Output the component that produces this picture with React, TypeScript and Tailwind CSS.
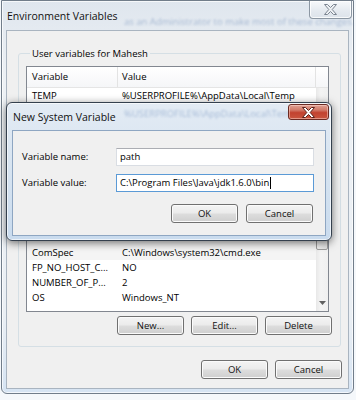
import React from "react";

const ui = "font-['Segoe_UI','Open_Sans','Noto_Sans',sans-serif]";

function XGlyph({ fill, stroke }: { fill: string; stroke: string }) {
  return (
    <svg width="13" height="11" viewBox="-0.5 -0.5 13 11">
      <polygon
        points="0,0 3,0 6,3 9,0 12,0 7.7,5 12,10 9,10 6,7 3,10 0,10 4.3,5"
        fill={fill}
        stroke={stroke}
        strokeWidth="1"
        strokeLinejoin="round"
      />
    </svg>
  );
}

function Btn({ label, className = "" }: { label: string; className?: string }) {
  return (
    <div
      className={`flex h-[19px] w-[67px] items-center justify-center rounded-[3px] border border-[#707070] bg-[linear-gradient(180deg,#f4f4f4_0%,#ebebeb_48%,#dddddd_52%,#cfcfcf_100%)] text-[9.5px] leading-none text-[#111] shadow-[inset_0_0_0_1px_#fbfbfb] ${className}`}
    >
      {label}
    </div>
  );
}

function Row({ a, b, hl = false }: { a: string; b: string; hl?: boolean }) {
  return (
    <div className={`flex h-[15px] items-center text-[9.5px] leading-none ${hl ? "bg-[#f4f4f4]" : ""}`}>
      <div className="w-[91px] shrink-0 pl-[5px] whitespace-nowrap">{a}</div>
      <div className="pl-[4px] whitespace-nowrap">{b}</div>
    </div>
  );
}

export default function App() {
  return (
    <div className={`relative h-[400px] w-[356px] overflow-hidden bg-[#f5f8fb] text-black ${ui}`}>
      {/* Environment Variables window */}
      <div className="ml-[1px] flex h-[394px] w-[353px] flex-col rounded-b-[6px] border border-[#717d8a] bg-[linear-gradient(180deg,#dfe6ee_0%,#edf1f5_20%,#eaeff4_80%,#d6e4f3_100%)] px-[4px] pb-[4px] shadow-[inset_0_0_0_1px_rgba(255,255,255,0.7)]">
        {/* title bar */}
        <div className="relative flex h-[29px] items-start">
          <span className="pointer-events-none absolute left-[118px] top-[14px] whitespace-nowrap text-[9.5px] text-[#7d97bd] opacity-60 blur-[1.3px]">
            as an Administrator to make most of these changes.
          </span>
          <span className="relative ml-[1px] mt-[8px] text-[10.5px] leading-[14px] text-[#111]">
            Environment Variables
          </span>
          <div className="relative -mr-[3px] ml-auto flex h-[18px] w-[43px] items-center justify-center rounded-b-[4px] border border-t-0 border-[#8c97a3] bg-[linear-gradient(180deg,#f7f9fb,#e4e9ef_60%,#dde3ea)] shadow-[inset_0_0_0_1px_rgba(255,255,255,0.8)]">
            <XGlyph fill="#eef1f4" stroke="#7b8490" />
          </div>
        </div>

        {/* client area */}
        <div className="flex flex-1 flex-col border border-[#a9b4c0] bg-[#f0f0f0]">
          <fieldset className="ml-[11px] mr-[7px] mt-[16px] rounded-[3px] border border-[#d5dfe5] pb-[11px] pl-[7px] pr-[8px]">
            <legend className="ml-[4px] px-[2px] text-[9.5px] leading-[13px]">User variables for Mahesh</legend>

            {/* list view */}
            <div className="mr-[3px] mt-[6px] flex h-[246px] flex-col border border-[#828790] bg-white">
              <div className="flex h-[21px] shrink-0 items-center border-b border-[#e5e5e5] bg-[linear-gradient(180deg,#ffffff,#f5f6f8)] text-[9.5px] leading-none">
                <div className="flex h-full w-[91px] items-center border-r border-[#e3e3e3] pl-[5px]">Variable</div>
                <div className="flex h-full w-[198px] items-center border-r border-[#e3e3e3] pl-[4px]">Value</div>
                <div className="flex-1" />
              </div>
              <div className="flex flex-1">
                <div className="flex flex-1 flex-col">
                  <Row a="TEMP" b="%USERPROFILE%\AppData\Local\Temp" />
                  <div className="flex-1 bg-[linear-gradient(180deg,#ffffff,#f4f4f4_30%)]" />
                  <Row a="ComSpec" b="C:\Windows\system32\cmd.exe" hl />
                  <Row a="FP_NO_HOST_C..." b="NO" />
                  <Row a="NUMBER_OF_P..." b="2" />
                  <Row a="OS" b="Windows_NT" />
                  <div className="h-[6px]" />
                </div>
                {/* scrollbar */}
                <div className="flex w-[12px] flex-col bg-[linear-gradient(90deg,#e8e8e8,#f4f4f4_40%,#f0f0f0)]">
                  <div className="h-[17px]" />
                  <div className="h-[145px] rounded-[2px] border border-[#9c9c9c] bg-[linear-gradient(90deg,#f3f3f3,#e2e2e2)]" />
                  <div className="flex-1" />
                  <div className="flex h-[17px] items-center justify-center">
                    <svg width="7" height="4" viewBox="0 0 7 4">
                      <polygon points="0,0 7,0 3.5,4" fill="#606060" />
                    </svg>
                  </div>
                </div>
              </div>
            </div>

            <div className="mt-[4px] flex justify-end gap-[7px]">
              <Btn label="New..." />
              <Btn label="Edit..." />
              <Btn label="Delete" />
            </div>
          </fieldset>

          <div className="mr-[6px] mt-[13px] flex justify-end gap-[7px]">
            <Btn label="OK" />
            <Btn label="Cancel" />
          </div>
        </div>
      </div>

      {/* New System Variable dialog (overlay) */}
      <div className="absolute left-[6px] top-[102px] flex h-[139px] w-[326px] flex-col rounded-[6px] border border-[#34404e] bg-[linear-gradient(180deg,#e3ebf4_0%,#d9e5f1_40%,#c9dbee_100%)] px-[5px] pb-[4px] shadow-[0_2px_9px_rgba(0,0,0,0.55),inset_0_0_0_1px_rgba(255,255,255,0.65)]">
        <div className="relative flex h-[27px] items-start">
          <span className="pointer-events-none absolute left-[112px] top-[4px] whitespace-nowrap text-[9.5px] text-[#7f9cc4] opacity-60 blur-[1.3px]">
            %USERPROFILE%\AppData\Local\Temp
          </span>
          <span className="relative ml-[1px] mt-[7px] text-[10.5px] leading-[14px] text-[#111]">New System Variable</span>
          <div className="relative -mr-[3px] ml-auto mt-[1px] flex h-[16px] w-[41px] items-center justify-center rounded-[3px] border border-[#6b2a22] bg-[linear-gradient(180deg,#e0a194_0%,#d27c6b_35%,#c2422f_55%,#c9553f_100%)] shadow-[inset_0_0_0_1px_rgba(255,220,210,0.5)]">
            <XGlyph fill="#ffffff" stroke="#5a2019" />
          </div>
        </div>
        <div className="flex flex-1 flex-col border border-[#8ea6c2] bg-[#f0f0f0] pl-[9px] pr-[11px] pt-[17px]">
          <div className="flex h-[18px] items-center">
            <div className="w-[94px] shrink-0 text-[9.5px]">Variable name:</div>
            <div className="flex h-[18px] flex-1 items-center border border-[#d9dde3] border-t-[#abadb3] bg-white pl-[3px] text-[9.5px]">
              path
            </div>
          </div>
          <div className="mt-[8px] flex h-[18px] items-center">
            <div className="w-[94px] shrink-0 text-[9.5px]">Variable value:</div>
            <div className="flex h-[18px] flex-1 items-center border border-[#5b9ad6] bg-white pl-[3px] text-[9.5px]">
              <span className="whitespace-nowrap">C:\Program Files\Java\jdk1.6.0\bin</span>
              <span className="ml-[1px] h-[12px] w-[1px] bg-black" />
            </div>
          </div>
          <div className="mt-[12px] flex justify-end gap-[8px] pr-[1px]">
            <Btn label="OK" />
            <Btn label="Cancel" />
          </div>
        </div>
      </div>
    </div>
  );
}
